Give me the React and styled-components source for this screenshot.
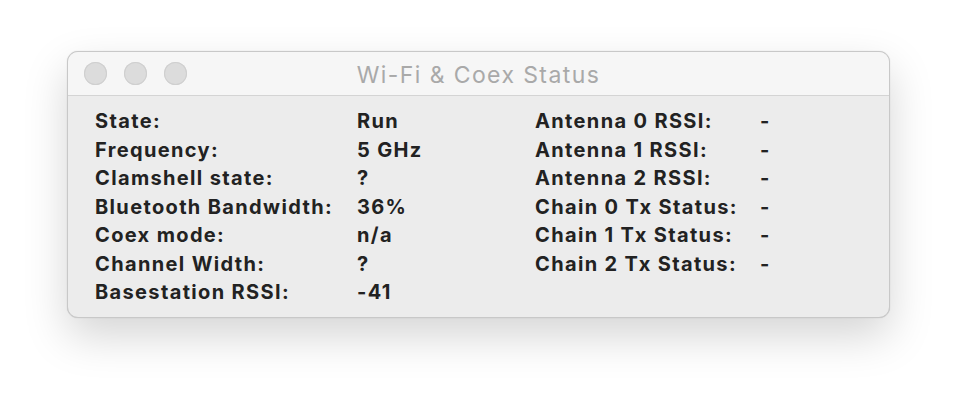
import styled, { createGlobalStyle } from "styled-components";

const GlobalStyle = createGlobalStyle`
  html, body {
    margin: 0;
    padding: 0;
    background: #ffffff;
  }
  body {
    width: 958px;
    height: 402px;
    overflow: hidden;
  }
`;

const left = [
    ["State:", "Run"],
    ["Frequency:", "5 GHz"],
    ["Clamshell state:", "?"],
    ["Bluetooth Bandwidth:", "36%"],
    ["Coex mode:", "n/a"],
    ["Channel Width:", "?"],
    ["Basestation RSSI:", "-41"],
];

const right = [
    ["Antenna 0 RSSI:", "-"],
    ["Antenna 1 RSSI:", "-"],
    ["Antenna 2 RSSI:", "-"],
    ["Chain 0 Tx Status:", "-"],
    ["Chain 1 Tx Status:", "-"],
    ["Chain 2 Tx Status:", "-"],
];

function App() {
    return (
        <Page>
            <GlobalStyle />
            <Window>
                <TitleBar>
                    <Lights>
                        <Light />
                        <Light />
                        <Light />
                    </Lights>
                    <Title>Wi-Fi &amp; Coex Status</Title>
                </TitleBar>
                <Body>
                    <Table $labelWidth="262px" $width="440px">
                        {left.map(([k, v]) => (
                            <Row key={k}>
                                <Cell>{k}</Cell>
                                <Cell>{v}</Cell>
                            </Row>
                        ))}
                    </Table>
                    <Table $labelWidth="225px" $width="auto">
                        {right.map(([k, v]) => (
                            <Row key={k}>
                                <Cell>{k}</Cell>
                                <Cell>{v}</Cell>
                            </Row>
                        ))}
                    </Table>
                </Body>
            </Window>
        </Page>
    );
}

const Page = styled.div`
    width: 958px;
    height: 402px;
    padding: 51px 0 0 67px;
    box-sizing: border-box;
`;

const Window = styled.div`
    width: 823px;
    height: 267px;
    box-sizing: border-box;
    background: #ececec;
    border: 1px solid #c8c8c8;
    border-radius: 11px;
    overflow: hidden;
    box-shadow: 0 0 1px rgba(0, 0, 0, 0.2), 0 18px 44px rgba(0, 0, 0, 0.17);
    display: flex;
    flex-direction: column;
`;

const TitleBar = styled.div`
    height: 43px;
    flex: none;
    background: #f6f6f6;
    border-bottom: 1px solid #d4d4d4;
    position: relative;
    display: flex;
    align-items: center;
    justify-content: center;
`;

const Lights = styled.div`
    position: absolute;
    left: 16px;
    top: 10px;
    display: flex;
    gap: 17px;
`;

const Light = styled.span`
    width: 23px;
    height: 23px;
    border-radius: 50%;
    background: #dcdcdc;
    box-shadow: inset 0 0 0 1px #cfcfcf;
`;

const Title = styled.div`
    font-family: Inter, "Liberation Sans", sans-serif;
    font-size: 23px;
    letter-spacing: 1.4px;
    color: #a9a9a9;
    padding-top: 2px;
`;

const Body = styled.div`
    display: flex;
    padding: 11px 0 0 27px;
`;

const Table = styled.div`
    display: grid;
    grid-template-columns: ${props => props.$labelWidth} auto;
    grid-auto-rows: 28.5px;
    width: ${props => props.$width};
`;

const Row = styled.div`
    display: contents;
`;

const Cell = styled.div`
    font-family: Inter, "Liberation Sans", sans-serif;
    font-weight: 700;
    font-size: 20px;
    letter-spacing: 1.35px;
    color: #222;
    line-height: 28.5px;
    white-space: nowrap;
`;

export default App;
